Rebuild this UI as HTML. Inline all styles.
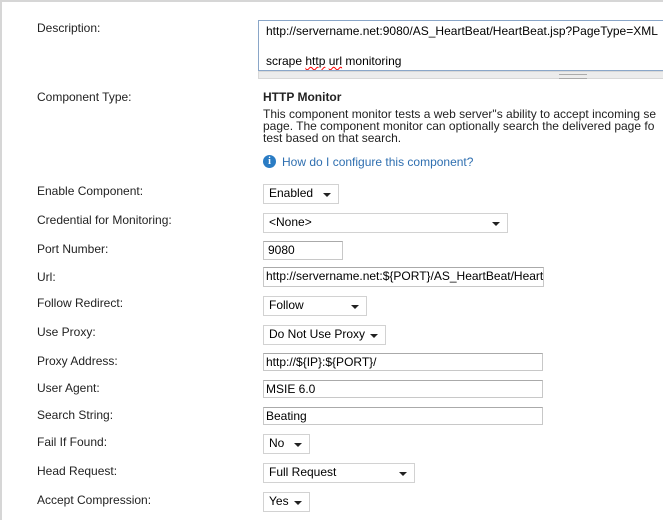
<!DOCTYPE html>
<html><head><meta charset="utf-8"><style>
body{margin:0;width:663px;height:520px;background:#fff;font-family:"Liberation Sans",Arial,sans-serif;font-size:12px;color:#222;position:relative;overflow:hidden}
.frame{position:absolute;left:0;top:0;width:663px;height:520px;border-top:2px solid #d6d6d6;border-left:2px solid #d6d6d6;box-sizing:border-box}
.l{position:absolute;left:37px;line-height:14px}
.c{position:absolute;box-sizing:border-box;border:1px solid #c8c8c8;border-top-color:#aaa;background:#fff;font-size:12px;line-height:16px;padding-left:4px;white-space:nowrap;overflow:hidden;color:#000}
.s{border:1px solid #d2d2d2;padding-left:5px;font-size:12px;line-height:17px}
.s::after{content:"";position:absolute;right:7px;top:8px;border-left:4px solid transparent;border-right:4px solid transparent;border-top:4px solid #222}
.t{position:absolute;left:263px;line-height:12px}
u{text-decoration:underline wavy red;text-decoration-thickness:1px}
</style></head><body>
<div class="frame"></div>
<div class="l" style="top:21px">Description:</div>
<div class="c" style="left:258px;top:20px;width:420px;height:51px;border-color:#8aa6c8;padding-left:7px;line-height:15px;padding-top:3px">http://servername.net:9080/AS_HeartBeat/HeartBeat.jsp?PageType=XML<br><br><span>scrape <u>http</u> <u>url</u> monitoring</span></div>
<div style="position:absolute;left:258px;top:71px;width:410px;height:8px;background:#ececec;border:1px solid #d8d8d8;box-sizing:border-box"><div style="position:absolute;left:300px;top:2px;width:28px;height:3px;border-top:1px solid #aaa;border-bottom:1px solid #aaa"></div></div>
<div class="l" style="top:90px">Component Type:</div>
<div class="t" style="top:91px;font-weight:bold">HTTP Monitor</div>
<div class="t" style="top:108px;white-space:nowrap">This component monitor tests a web server"s ability to accept incoming se<br>page. The component monitor can optionally search the delivered page fo<br>test based on that search.</div>
<div style="position:absolute;left:263px;top:155px;width:13px;height:13px;border-radius:50%;background:#2a7cc4;color:#fff;font-weight:bold;font-size:10px;line-height:13px;text-align:center;font-family:'Liberation Serif',serif">i</div>
<div class="t" style="left:282px;top:156px;color:#2f6fb0">How do I configure this component?</div>

<div class="l" style="top:184px">Enable Component:</div>
<div class="c s" style="left:263px;top:184px;width:76px;height:20px">Enabled</div>
<div class="l" style="top:213px">Credential for Monitoring:</div>
<div class="c s" style="left:263px;top:213px;width:245px;height:20px">&lt;None&gt;</div>
<div class="l" style="top:242px">Port Number:</div>
<div class="c" style="left:263px;top:241px;width:80px;height:19px">9080</div>
<div class="l" style="top:270px">Url:</div>
<div class="c" style="left:263px;top:267px;width:281px;height:20px;padding-left:2px">http://servername.net:${PORT}/AS_HeartBeat/HeartBeat.jsp</div>
<div class="l" style="top:296px">Follow Redirect:</div>
<div class="c s" style="left:263px;top:296px;width:104px;height:20px">Follow</div>
<div class="l" style="top:325px">Use Proxy:</div>
<div class="c s" style="left:263px;top:325px;width:123px;height:20px">Do Not Use Proxy</div>
<div class="l" style="top:354px">Proxy Address:</div>
<div class="c" style="left:263px;top:353px;width:280px;height:18px;padding-left:2px">http://${IP}:${PORT}/</div>
<div class="l" style="top:381px">User Agent:</div>
<div class="c" style="left:263px;top:380px;width:280px;height:18px;padding-left:2px">MSIE 6.0</div>
<div class="l" style="top:408px">Search String:</div>
<div class="c" style="left:263px;top:407px;width:280px;height:18px;padding-left:2px">Beating</div>
<div class="l" style="top:435px">Fail If Found:</div>
<div class="c s" style="left:263px;top:434px;width:47px;height:20px">No</div>
<div class="l" style="top:464px">Head Request:</div>
<div class="c s" style="left:263px;top:463px;width:152px;height:20px">Full Request</div>
<div class="l" style="top:493px">Accept Compression:</div>
<div class="c s" style="left:263px;top:492px;width:47px;height:20px">Yes</div>
</body></html>
